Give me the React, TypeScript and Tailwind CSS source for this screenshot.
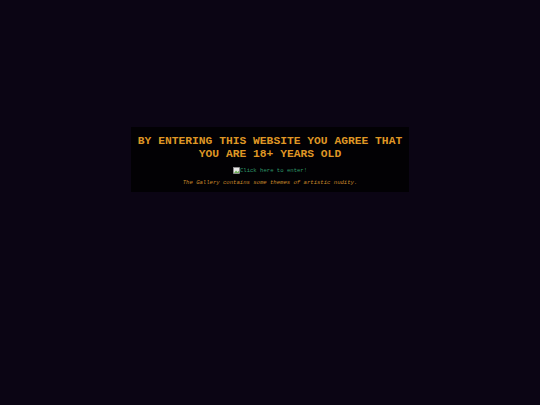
export default function App() {
  return (
    <div className="min-h-[405px] w-full bg-[#0b0514] pt-[127px] font-['Liberation_Mono',monospace]">
      <div className="mx-auto w-[278px] bg-[#020104] px-[6px] pt-[8px] pb-[6px] text-center">
        <h1 className="text-[11.3px] leading-[13px] font-bold text-[#df9624]">
          BY ENTERING THIS WEBSITE YOU AGREE THAT YOU ARE 18+ YEARS OLD
        </h1>
        <div className="mt-[6px] flex items-center justify-center text-[5.6px] leading-[7px] text-[#2f9a6a]">
          <svg width="7" height="7" viewBox="0 0 7 7">
            <rect x="0.5" y="0.5" width="6" height="6" fill="#e8e8e8" stroke="#9a9a9a" strokeWidth="0.6" />
            <path d="M1 6 L3 3.5 L4.5 5 L6 3.8 L6 6 Z" fill="#6fae5a" />
          </svg>
          <span>Click here to enter!</span>
        </div>
        <p className="mt-[5px] text-[5.6px] leading-[7px] italic text-[#c98a2a]">
          The Gallery contains some themes of artistic nudity.
        </p>
      </div>
    </div>
  );
}
